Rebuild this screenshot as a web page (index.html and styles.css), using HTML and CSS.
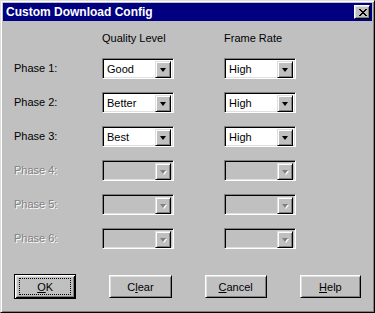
FILE: index.html
```html
<!DOCTYPE html>
<html lang="en">
<head>
  <meta charset="UTF-8">
  <title>Custom Download Config</title>
  <link rel="stylesheet" href="styles.css">
</head>
<body>
  <div class="window">
    <div class="titlebar">
      <span class="title">Custom Download Config</span>
      <span class="close">
        <svg width="8" height="7" viewBox="0 0 8 7" shape-rendering="crispEdges">
          <path d="M0 0h2v1h-2zM6 0h2v1h-2zM1 1h2v1h-2zM5 1h2v1h-2zM2 2h4v1h-4zM3 3h2v1h-2zM2 4h4v1h-4zM1 5h2v1h-2zM5 5h2v1h-2zM0 6h2v1h-2zM6 6h2v1h-2z" fill="#000"/>
        </svg>
      </span>
    </div>

    <div class="content">
      <div class="grid">
        <span></span>
        <span class="col-head">Quality Level</span>
        <span></span>
        <span class="col-head">Frame Rate</span>

        <span class="label">Phase 1:</span>
        <div class="combo"><span class="value">Good</span><span class="drop"><i class="arrow"></i></span></div>
        <span></span>
        <div class="combo"><span class="value">High</span><span class="drop"><i class="arrow"></i></span></div>

        <span class="label">Phase 2:</span>
        <div class="combo"><span class="value">Better</span><span class="drop"><i class="arrow"></i></span></div>
        <span></span>
        <div class="combo"><span class="value">High</span><span class="drop"><i class="arrow"></i></span></div>

        <span class="label">Phase 3:</span>
        <div class="combo"><span class="value">Best</span><span class="drop"><i class="arrow"></i></span></div>
        <span></span>
        <div class="combo"><span class="value">High</span><span class="drop"><i class="arrow"></i></span></div>

        <span class="label disabled">Phase 4:</span>
        <div class="combo disabled"><span class="value"></span><span class="drop"><i class="arrow"></i></span></div>
        <span></span>
        <div class="combo disabled"><span class="value"></span><span class="drop"><i class="arrow"></i></span></div>

        <span class="label disabled">Phase 5:</span>
        <div class="combo disabled"><span class="value"></span><span class="drop"><i class="arrow"></i></span></div>
        <span></span>
        <div class="combo disabled"><span class="value"></span><span class="drop"><i class="arrow"></i></span></div>

        <span class="label disabled">Phase 6:</span>
        <div class="combo disabled"><span class="value"></span><span class="drop"><i class="arrow"></i></span></div>
        <span></span>
        <div class="combo disabled"><span class="value"></span><span class="drop"><i class="arrow"></i></span></div>
      </div>

      <div class="buttons">
        <button class="btn default"><span class="focus"><u>O</u>K</span></button>
        <button class="btn">C<u>l</u>ear</button>
        <button class="btn"><u>C</u>ancel</button>
        <button class="btn last"><u>H</u>elp</button>
      </div>
    </div>
  </div>
</body>
</html>
```

FILE: styles.css
```css
/* Win95 style dialog */
* {
  box-sizing: border-box;
}

body {
  margin: 0;
  font-family: "Liberation Sans", Arial, sans-serif;
  font-size: 11px;
  color: #000;
  background-color: #c0c0c0;
}

.window {
  width: 375px;
  height: 313px;
  padding: 2px;
  background-color: #c0c0c0;
  border: 1px solid;
  border-color: #dfdfdf #000 #000 #dfdfdf;
  box-shadow: inset 1px 1px #fff, inset -1px -1px #808080;
}

.titlebar {
  height: 18px;
  display: flex;
  align-items: center;
  justify-content: space-between;
  padding: 0 2px 0 3px;
  background-color: #000080;
  color: #fff;
}

.title {
  font-weight: bold;
  font-size: 12px;
}

.close {
  width: 16px;
  height: 14px;
  display: flex;
  align-items: center;
  justify-content: center;
  padding-left: 1px;
  background-color: #c0c0c0;
  border: 1px solid;
  border-color: #fff #000 #000 #fff;
  box-shadow: inset 1px 1px #dfdfdf, inset -1px -1px #808080;
}

.content {
  padding: 11px 11px 0;
}

.grid {
  display: grid;
  grid-template-columns: 88px 72px 50px 72px;
  grid-auto-rows: 21px;
  grid-template-rows: 13px;
  row-gap: 13px;
  align-items: center;
}

.col-head {
  line-height: 13px;
}

.label {
  line-height: 13px;
}

.label.disabled {
  color: #808080;
  text-shadow: 1px 1px 0 #fff;
}

/* Combo box */
.combo {
  width: 72px;
  height: 21px;
  display: flex;
  padding: 2px;
  background-color: #fff;
  border: 1px solid;
  border-color: #808080 #fff #fff #808080;
  box-shadow: inset 1px 1px #000, inset -1px -1px #dfdfdf;
}

.combo.disabled {
  background-color: #c0c0c0;
}

.combo .value {
  flex: 1;
  padding-left: 2px;
  line-height: 17px;
}

.combo .drop {
  width: 16px;
  height: 17px;
  display: flex;
  align-items: center;
  justify-content: center;
  background-color: #c0c0c0;
  border: 1px solid;
  border-color: #dfdfdf #000 #000 #dfdfdf;
  box-shadow: inset 1px 1px #fff, inset -1px -1px #808080;
}

.arrow {
  width: 0;
  height: 0;
  border-left: 3.5px solid transparent;
  border-right: 3.5px solid transparent;
  border-top: 4px solid #000;
}

.combo.disabled .arrow {
  border-top-color: #808080;
  filter: drop-shadow(1px 1px 0 #fff);
}

/* Buttons */
.buttons {
  display: flex;
  align-items: center;
  gap: 33px;
  margin-top: 25px;
}

.btn {
  width: 63px;
  height: 23px;
  padding: 0;
  font: inherit;
  color: #000;
  background-color: #c0c0c0;
  border: 1px solid;
  border-color: #fff #000 #000 #fff;
  box-shadow: inset 1px 1px #dfdfdf, inset -1px -1px #808080;
}

.btn.last {
  width: 62px;
  margin-left: auto;
}

.btn.default {
  height: 25px;
  display: flex;
  padding: 3px 4px;
  border-color: #000;
  box-shadow: inset 1px 1px #fff, inset -1px -1px #000, inset 2px 2px #dfdfdf, inset -2px -2px #808080;
}

.btn .focus {
  flex: 1;
  display: flex;
  align-items: center;
  justify-content: center;
  border: 1px dotted #000;
}
```
